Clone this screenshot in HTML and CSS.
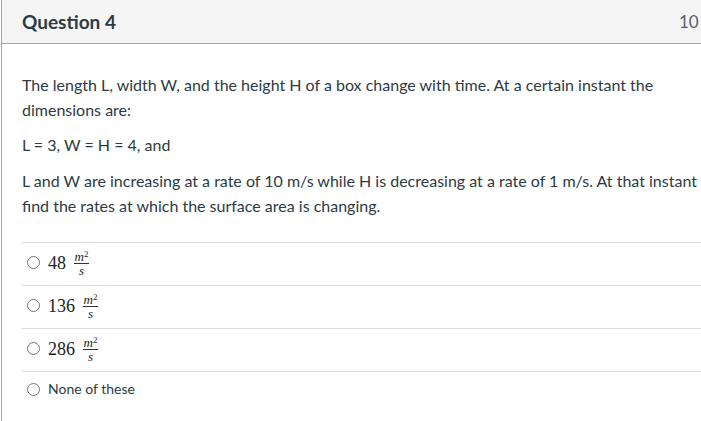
FILE: index.html
```html
<!DOCTYPE html>
<html>
<head>
<meta charset="utf-8">
<link rel="stylesheet" href="styles.css">
</head>
<body>
<div class="question">
  <div class="q-header">
    <span class="q-title">Question 4</span>
    <span class="q-points">10</span>
  </div>
  <div class="q-body">
    <p>The length L, width W, and the height H of a box change with time. At a certain instant the dimensions are:</p>
    <p class="given">L = 3, W = H = 4, and</p>
    <p>L and W are increasing at a rate of 10 m/s while H is decreasing at a rate of 1 m/s. At that instant find the rates at which the surface area is changing.</p>
    <div class="answers">
      <label class="answer"><span class="radio"></span><span class="math">48 <span class="frac"><span class="num">m<sup>2</sup></span><span class="den">s</span></span></span></label>
      <label class="answer"><span class="radio"></span><span class="math">136 <span class="frac"><span class="num">m<sup>2</sup></span><span class="den">s</span></span></span></label>
      <label class="answer"><span class="radio"></span><span class="math">286 <span class="frac"><span class="num">m<sup>2</sup></span><span class="den">s</span></span></span></label>
      <label class="answer plain"><span class="radio"></span><span class="text">None of these</span></label>
    </div>
  </div>
</div>
</body>
</html>
```
FILE: styles.css
```css
html, body {
  margin: 0;
  padding: 0;
  background: #ffffff;
  overflow: hidden;
}
body {
  font-family: Lato, "Noto Sans", sans-serif;
  color: #2d3b45;
}
.question {
  margin-left: 1px;
  width: 760px;
  border-left: 1px solid #a5a5a5;
  min-height: 421px;
}
.q-header {
  display: flex;
  align-items: center;
  height: 44px;
  box-sizing: border-box;
  background: #f5f5f5;
  border-bottom: 1px solid #a5a5a5;
  padding: 0 0 0 20px;
}
.q-title {
  font-size: 19px;
  font-weight: 700;
  color: #2d3b45;
  width: 657px;
}
.q-points {
  font-size: 17px;
  color: #55606a;
}
.q-body {
  padding: 28px 0 0 20px;
  width: 681px;
}
.q-body p {
  margin: 0 0 10px 0;
  font-size: 16px;
  line-height: 25px;
}
.q-body p.given {
  margin-bottom: 11px;
}
.answers {
  margin-top: 24px;
  width: 740px;
}
.answer {
  display: flex;
  align-items: flex-start;
  height: 43px;
  border-top: 1px solid #d9dcde;
  padding-left: 5px;
  padding-top: 7px;
  box-sizing: border-box;
}
.answer.plain {
  padding-top: 8px;
}
.radio {
  width: 11px;
  height: 11px;
  border: 1px solid #6b7780;
  border-radius: 50%;
  margin-right: 8px;
  margin-top: 6px;
  flex: none;
}
.answer.plain .radio {
  margin-top: 3px;
}
.math {
  font-family: "Liberation Serif", "DejaVu Serif", serif;
  font-size: 18px;
  line-height: 26px;
  color: #222;
  white-space: nowrap;
}
.frac {
  display: inline-flex;
  flex-direction: column;
  align-items: center;
  vertical-align: 8px;
  margin-left: 3px;
  font-style: italic;
  font-size: 13px;
  line-height: 11px;
}
.num {
  border-bottom: 1px solid #333;
  padding: 0 1px 1px;
}
.num sup {
  font-size: 9px;
  font-style: normal;
  vertical-align: 4px;
  line-height: 0;
}
.den {
  padding-top: 1px;
}
.text {
  font-size: 14px;
  color: #2d3b45;
}
```
